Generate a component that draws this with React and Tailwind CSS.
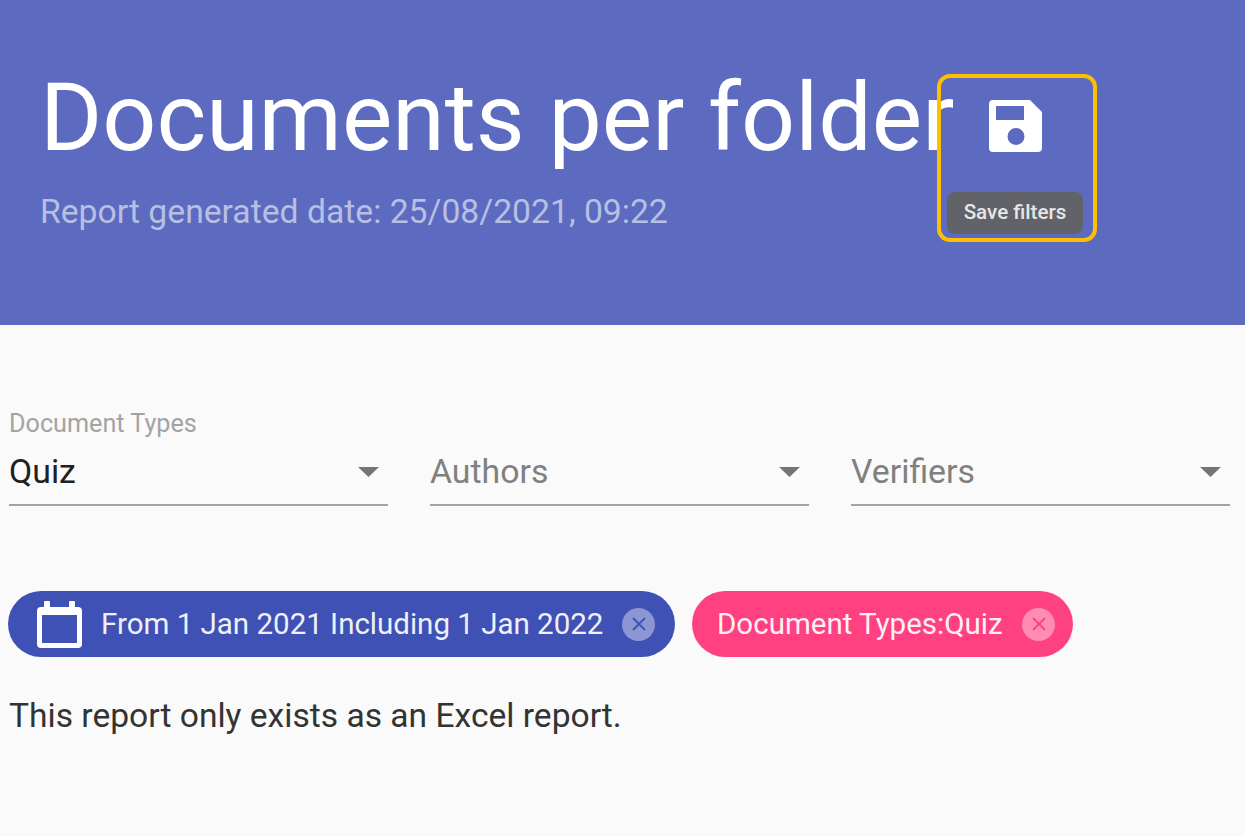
import React from 'react';

const roboto = { fontFamily: 'Roboto, sans-serif' };

const Caret = () => (
  <svg width="22" height="12" viewBox="0 0 22 12" className="shrink-0">
    <path d="M0 1h21L10.5 11z" fill="#757575" />
  </svg>
);

const CloseDot = ({ bg, stroke }) => (
  <span className={`flex h-[33px] w-[33px] shrink-0 items-center justify-center rounded-full ${bg}`}>
    <svg width="18" height="18" viewBox="0 0 18 18" fill="none" stroke={stroke} strokeWidth="1.8">
      <path d="M3 3l12 12M15 3L3 15" />
    </svg>
  </span>
);

const FilterSelect = ({ label, value, placeholder }) => (
  <div className="flex h-[96px] w-[379px] flex-col justify-end border-b-2 border-[#a3a3a3] pb-[13px]">
    {label && <div className="mb-[15px] text-[25.2px] leading-[28px] text-[#a3a3a3]">{label}</div>}
    <div className="flex items-center justify-between pr-[8px]">
      <span className={`text-[33.8px] leading-[38px] ${placeholder ? 'text-[#808080]' : 'text-[#212121]'}`}>
        {value}
      </span>
      <Caret />
    </div>
  </div>
);

export default function App() {
  return (
    <div className="h-[836px] w-[1245px] overflow-hidden bg-[#fafafa]" style={roboto}>
      {/* HEADER */}
      <section className="relative h-[325px] bg-[#5c6bc0] pl-[40px] pt-[65px]">
        <div className="flex items-start">
          <h1 className="whitespace-nowrap text-[95px] font-normal leading-[106px] text-white">Documents per folder</h1>
        </div>
        <p className="mt-[21px] text-[33.7px] leading-[40px] text-[#b7bfe3]">Report generated date: 25/08/2021, 09:22</p>

        {/* highlighted save button */}
        <div className="absolute left-[937px] top-[74px] flex h-[168px] w-[160px] flex-col items-center rounded-[13px] border-4 border-[#fcc000]">
          <svg width="54" height="54" viewBox="0 0 54 54" className="-ml-[3px] mt-[21px]">
            <path
              fillRule="evenodd"
              fill="#fff"
              d="M4 1h37l12 12v36a4 4 0 0 1-4 4H4a4 4 0 0 1-4-4V5a4 4 0 0 1 4-4zM7 7v14h28V7zM27 29a8.5 8.5 0 1 0 0 17 8.5 8.5 0 0 0 0-17z"
            />
          </svg>
          <div className="absolute left-[6px] top-[114px] flex h-[42px] w-[136px] items-center justify-center rounded-[8px] bg-[#616368] pb-[2px] text-[20.6px] font-medium text-[#e6e6e6]">
            Save filters
          </div>
        </div>
      </section>

      {/* FILTERS */}
      <section className="px-[9px]">
        <div className="mt-[85px] flex gap-[42px]">
          <FilterSelect label="Document Types" value="Quiz" />
          <FilterSelect value="Authors" placeholder />
          <FilterSelect value="Verifiers" placeholder />
        </div>

        <div className="-ml-px mt-[85px] flex gap-[17px]">
          <div className="flex h-[66px] w-[667px] items-center rounded-full bg-[#3f51b5] pl-[29px] pr-[20px] text-white">
            <svg width="45" height="47" viewBox="0 0 45 47" className="shrink-0" fill="#fff">
              <path
                fillRule="evenodd"
                d="M7 1a1 1 0 0 1 1-1h4a1 1 0 0 1 1 1v5h19V1a1 1 0 0 1 1-1h4a1 1 0 0 1 1 1v5h3a4 4 0 0 1 4 4v33a4 4 0 0 1-4 4H4a4 4 0 0 1-4-4V10a4 4 0 0 1 4-4h3zM5 14v28h35V14z"
              />
            </svg>
            <span className="ml-[19px] flex-1 whitespace-nowrap text-[29.5px] text-[#eef0fa]">From 1 Jan 2021 Including 1 Jan 2022</span>
            <CloseDot bg="bg-[#8c96d3]" stroke="#3f51b5" />
          </div>
          <div className="flex h-[66px] w-[381px] items-center rounded-full bg-[#ff4081] pl-[25px] pr-[18px] text-white">
            <span className="flex-1 whitespace-nowrap text-[29.5px] text-[#ffeef4]">Document Types:Quiz</span>
            <CloseDot bg="bg-[#ff8cb3]" stroke="#ff4081" />
          </div>
        </div>

        <p className="mt-[39px] text-[33.6px] leading-[40px] text-[#333333]">This report only exists as an Excel report.</p>
      </section>
    </div>
  );
}
